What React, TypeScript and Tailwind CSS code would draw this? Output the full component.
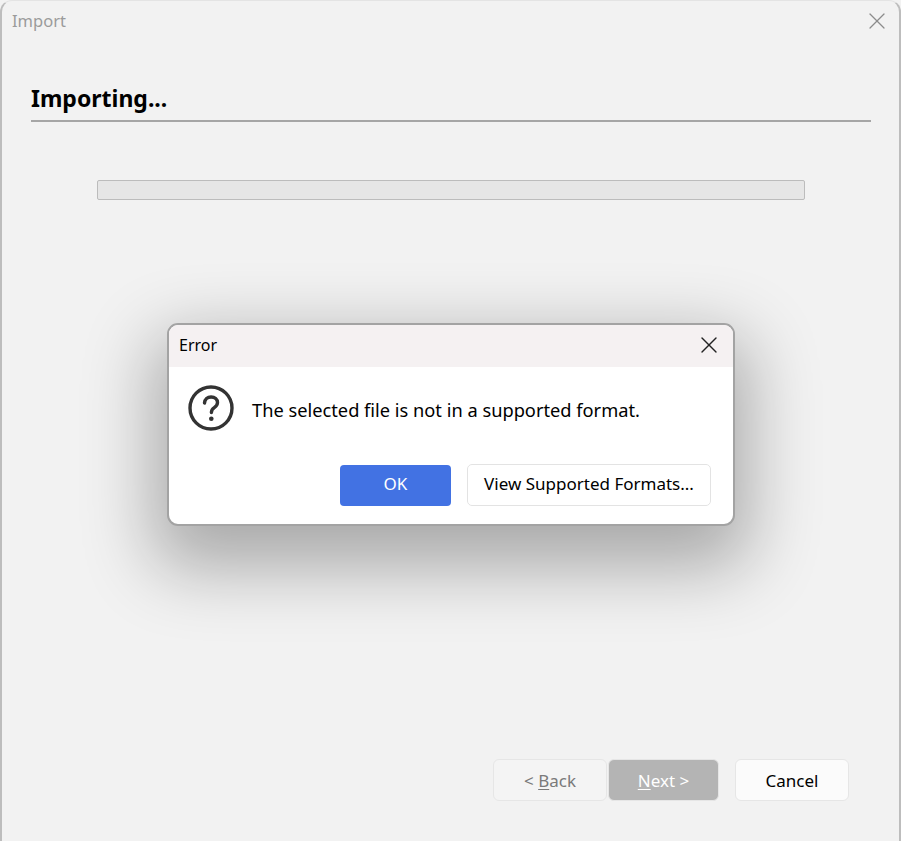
import { X } from 'lucide-react';

const font = "font-['Noto_Sans',sans-serif]";

const ErrorDialog = () => {
	return (
		<div className="absolute left-[165px] top-[322px] flex h-[203px] w-[568px] flex-col overflow-hidden rounded-[11px] border-2 border-[#a3a3a3] bg-white shadow-[0_28px_70px_14px_rgba(0,0,0,0.3)]">
			<div className="flex h-[42px] shrink-0 items-center justify-between bg-[#f5f1f2] pb-[2px] pl-[10px] pr-[10px]">
				<span className="text-[16px] text-black">Error</span>
				<X className="h-[28px] w-[28px] text-[#222]" strokeWidth={1.15} />
			</div>
			<div className="flex items-center pl-[18px] pt-[17px]">
				<svg width="48" height="48" viewBox="0 0 48 48" fill="none" className="shrink-0">
					<circle cx="24" cy="24" r="21" stroke="#333" strokeWidth="3.4" />
					<path d="M17.5 19c.3-3.800 3-6 6.600-6 3.700 0 6.400 2.300 6.400 5.600 0 2.500-1.300 3.800-3.200 5.100-1.900 1.300-2.900 2.300-2.900 4.800" stroke="#333" strokeWidth="3.400" strokeLinecap="round" />
					<circle cx="24.300" cy="34.800" r="2.300" fill="#333" />
				</svg>
				<p className="ml-[17px] pt-[4px] text-[18.25px] text-black">The selected file is not in a supported format.</p>
			</div>
			<div className="mt-[32px] flex items-center justify-end gap-[16px] pr-[22px]">
				<button className="h-[41px] w-[111px] rounded-[4px] bg-[#4272e3] pb-[3px] text-[17px] text-white">OK</button>
				<button className="h-[42px] w-[244px] rounded-[5px] border border-[#e3e3e3] bg-white pb-[3px] text-[17px] text-black">
					View Supported Formats...
				</button>
			</div>
		</div>
	);
};

const App = () => {
	return (
		<div className={`${font} h-[841px] w-[901px] overflow-hidden bg-[#f2f2f2]`}>
			<div className="relative flex h-[841px] w-[901px] flex-col rounded-t-[12px] border-x-2 border-t border-x-[#bdbdbd] border-t-[#e4e4e4] pl-[29px] pr-[28px]">
				<div className="-ml-[19px] -mr-[20px] flex h-[40px] shrink-0 items-center justify-between">
					<span className="text-[16.500px] text-[#9b9b9b]">Import</span>
					<X className="h-[28px] w-[28px] text-[#8c8c8c]" strokeWidth={1.05} />
				</div>
				<div className="mt-[42px] h-[39px] border-b-2 border-[#a6a6a6]">
					<h1 className="text-[23px] font-bold leading-[30px] text-black">Importing...</h1>
				</div>
				<div className="mx-[66px] mt-[58px] h-[20px] rounded-[2px] border border-[#bcbcbc] bg-[#e6e6e6]" />
				<div className="mt-auto mb-[40px] flex items-center justify-end pr-[22px]">
					<button className="h-[42px] w-[114px] rounded-[6px] border border-[#e6e6e6] bg-[#f4f4f4] pt-[1px] text-[17px] text-[#7a7a7a]">
						&lt; <span className="underline underline-offset-2">B</span>ack
					</button>
					<button className="ml-[1px] h-[42px] w-[111px] rounded-[6px] border border-[#e6e6e6] bg-[#b4b4b4] pt-[1px] text-[17px] text-white">
						<span className="underline underline-offset-2">N</span>ext &gt;
					</button>
					<button className="ml-[16px] h-[42px] w-[114px] rounded-[6px] border border-[#e6e6e6] bg-[#fbfbfb] pt-[1px] text-[17px] text-black">
						Cancel
					</button>
				</div>
				<ErrorDialog />
			</div>
		</div>
	);
};

export default App;
